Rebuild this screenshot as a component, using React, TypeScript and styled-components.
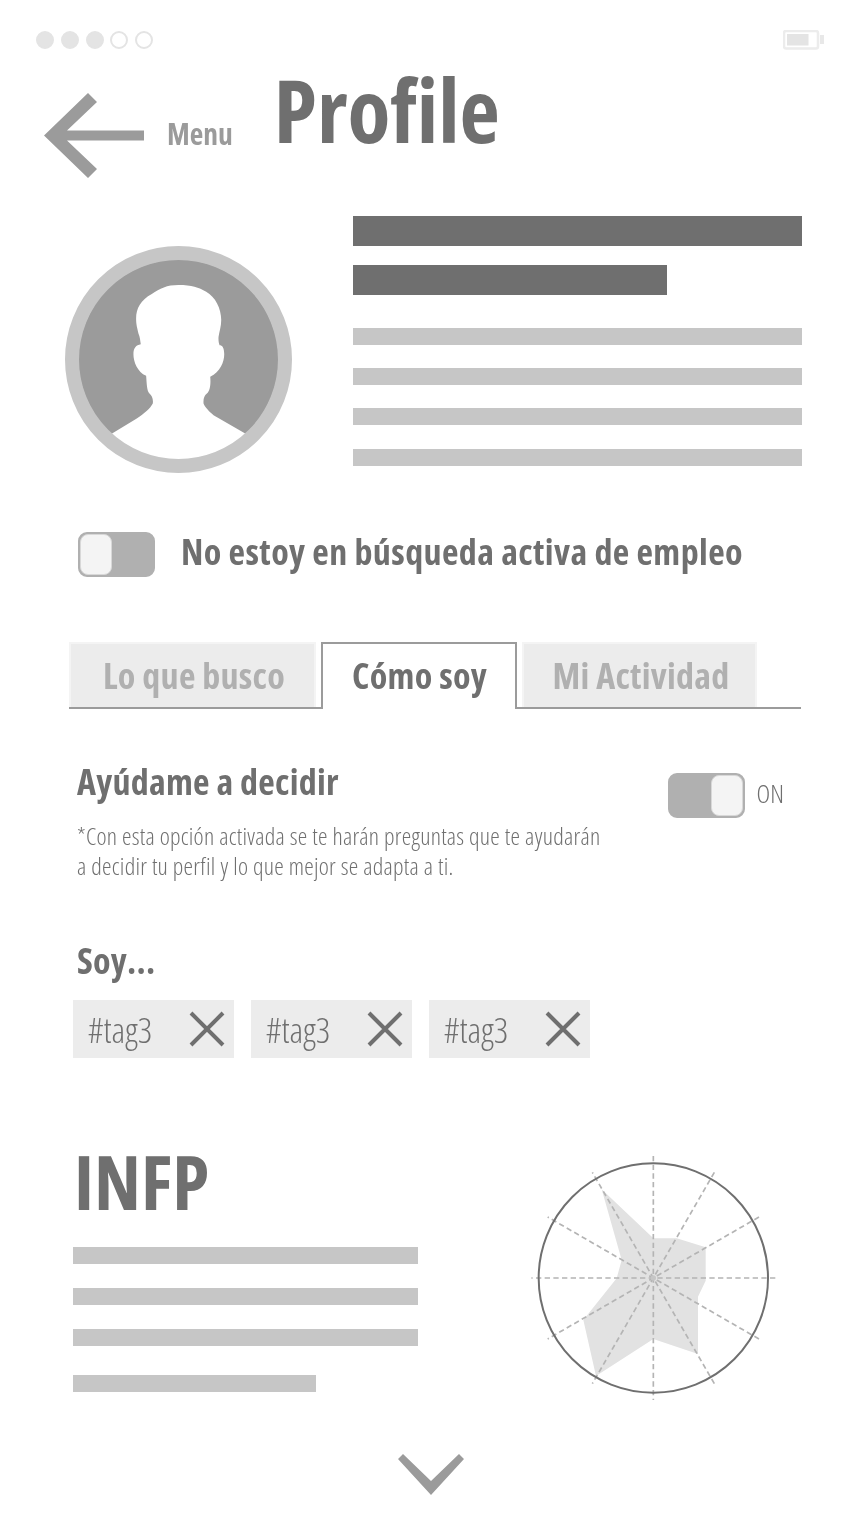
import React from 'react';
import styled, {createGlobalStyle} from "styled-components";

const GlobalStyle = createGlobalStyle`
  html, body {
    margin: 0;
    padding: 0;
    background: #fff;
  }
  body {
    font-family: "Open Sans", "Liberation Sans", sans-serif;
    font-stretch: 75%;
    color: #6f6f6f;
  }
`

const Page = styled.div`
  width: 862px;
  height: 1533px;
  overflow: hidden;
  will-change: transform;
`

const StatusBar = styled.div`
  display: flex;
  justify-content: space-between;
  align-items: center;
  padding: 31px 38px 0 36px;
  height: 18px;
`

const Dots = styled.div`
  display: flex;
  gap: 6.75px;
`

const Dot = styled.span<{ $filled?: boolean }>`
  box-sizing: border-box;
  width: 18px;
  height: 18px;
  border-radius: 50%;
  border: 2px solid #e4e4e4;
  background: ${p => p.$filled ? '#e4e4e4' : 'transparent'};
`

const Header = styled.header`
  display: flex;
  align-items: flex-end;
  height: 85px;
  margin-top: 44px;
  padding-left: 44px;
`

const MenuLabel = styled.span`
  font-weight: 700;
  font-size: 29.5px;
  line-height: 40px;
  color: #9b9b9b;
  margin: 0 41px 24px 23px;
`

const Title = styled.h1`
  margin: 0 0 19px;
  font-weight: 700;
  font-size: 88px;
  line-height: 100px;
  color: #6f6f6f;
`

const ProfileRow = styled.section`
  display: flex;
  gap: 61px;
  margin-top: 38px;
  padding-left: 65px;
`

const AvatarWrap = styled.div`
  margin-top: 30px;
  width: 227px;
  height: 227px;
`

const Lines = styled.div`
  display: flex;
  flex-direction: column;
  gap: 23px;
`

const Bar = styled.div<{ $w: number; $h?: number; $dark?: boolean; $mt?: number }>`
  width: ${p => p.$w}px;
  height: ${p => p.$h ?? 17}px;
  background: ${p => p.$dark ? '#6f6f6f' : '#c6c6c6'};
  margin-top: ${p => p.$mt ?? 0}px;
`

const StatusRow = styled.div`
  display: flex;
  align-items: center;
  gap: 26px;
  margin-top: 59px;
  padding-left: 78px;
`

const Switch = styled.div<{ $on?: boolean }>`
  box-sizing: border-box;
  display: flex;
  justify-content: ${p => p.$on ? 'flex-end' : 'flex-start'};
  width: 77px;
  height: 45px;
  border: 2px solid #b0b0b0;
  border-radius: 9px;
  background: #b0b0b0;
`

const Knob = styled.span`
  box-sizing: border-box;
  width: 32px;
  height: 41px;
  border: 1px solid #d8d8d8;
  border-radius: 8px;
  background: #f4f4f4;
`

const StatusText = styled.span`
  font-weight: 700;
  font-size: 36px;
  line-height: 31px;
  letter-spacing: 0.4px;
  padding-bottom: 6px;
`

const Tabs = styled.nav`
  box-sizing: border-box;
  display: flex;
  gap: 5px;
  width: 732px;
  height: 67px;
  margin: 65px 0 0 69px;
  border-bottom: 2px solid #9b9b9b;
`

const Tab = styled.div<{ $active?: boolean; $w: number }>`
  box-sizing: border-box;
  width: ${p => p.$w}px;
  height: ${p => p.$active ? 67 : 65}px;
  padding-left: ${p => p.$active ? 1 : 3}px;
  text-align: center;
  font-weight: 700;
  font-size: 36px;
  line-height: 64px;
  letter-spacing: 0.25px;
  color: ${p => p.$active ? '#6f6f6f' : '#b0b0b0'};
  background: ${p => p.$active ? '#fff' : '#ececec'};
  border: 2px solid ${p => p.$active ? '#9b9b9b' : '#f4f4f4'};
  border-bottom: ${p => p.$active ? 'none' : '0'};
`

const HelpRow = styled.section`
  display: flex;
  justify-content: space-between;
  align-items: flex-start;
  margin-top: 52px;
  padding: 0 78px 0 77px;
`

const SectionTitle = styled.h2`
  margin: 0;
  font-weight: 700;
  font-size: 36px;
  line-height: 42px;
  letter-spacing: 0.25px;
`

const Note = styled.p`
  margin: 18px 0 0;
  font-weight: 340;
  font-size: 24px;
  line-height: 30px;
  letter-spacing: 0.26px;
  width: 530px;
`

const OnGroup = styled.div`
  display: flex;
  align-items: center;
  gap: 12px;
  margin-top: 12px;
`

const OnLabel = styled.span`
  font-weight: 300;
  font-size: 26px;
  padding-bottom: 6px;
`

const TagsSection = styled.section`
  margin-top: 59px;
  padding-left: 77px;
`

const TagList = styled.div`
  display: flex;
  gap: 17.5px;
  margin: 18px 0 0 -4px;
`

const Tag = styled.div`
  display: flex;
  align-items: center;
  justify-content: space-between;
  box-sizing: border-box;
  width: 160.5px;
  height: 58px;
  padding: 0 9px 0 15px;
  background: #ececec;
  font-weight: 300;
  font-size: 35.5px;
`

const Bottom = styled.section`
  display: flex;
  justify-content: space-between;
  margin-top: 78px;
  padding: 0 72px 0 73px;
`

const TypeCol = styled.div`
  display: flex;
  flex-direction: column;
`

const TypeTitle = styled.h2`
  margin: 0 0 0 1px;
  font-weight: 700;
  font-size: 75.5px;
  line-height: 90px;
`

const TypeLines = styled.div`
  display: flex;
  flex-direction: column;
  gap: 24px;
  margin-top: 21px;
`

const Radar = styled.svg`
  display: block;
  width: 270px;
  height: 260px;
  margin-top: 14px;
`

const More = styled.svg`
  display: block;
  margin: 44px 0 0 398px;
`

const BackArrow = () => (
  <svg width="100" height="85" viewBox="0 0 100 85">
    <path d="M100 37.5 H23 L53 9 L44 0 L0 42.5 L44 85 L53 76 L23 47.5 H100 Z" fill="#9b9b9b"/>
  </svg>
)

const Battery = () => (
  <svg width="41" height="20" viewBox="0 0 41 20">
    <rect x="1" y="1" width="34" height="17.5" rx="2" fill="none" stroke="#ececec" strokeWidth="2.5"/>
    <rect x="4" y="4" width="21.5" height="11.5" fill="#e4e4e4"/>
    <rect x="37" y="5" width="4" height="9" fill="#e8e8e8"/>
  </svg>
)

const Avatar = () => (
  <svg width="227" height="227" viewBox="45 48 680 680">
    <circle cx="385" cy="388" r="300" fill="#9b9b9b"/>
    <path
      d="M385 165 C425 165 445 172 468 185 C495 200 513 235 513 270 C513 290 507 305 505 320 C504 332 506 340 508 345 C516 345 522 352 522 372 C522 395 510 425 480 440 C482 460 480 482 470 490 C462 497 459 505 460 520 C463 530 478 545 490 555 L590 613 A305 305 0 0 1 181 613 L260 565 C285 548 300 535 308 520 C310 505 305 497 298 490 C290 482 290 460 288 437 C262 425 250 395 250 372 C250 352 258 345 272 342 C270 330 270 322 265 310 C262 295 258 285 258 265 C258 235 272 210 305 192 C330 175 350 165 385 165 Z"
      fill="#fff"
    />
    <circle cx="385" cy="388" r="319" fill="none" stroke="#c6c6c6" strokeWidth="42"/>
  </svg>
)

const CloseMark = () => (
  <svg width="36" height="36" viewBox="0 0 36 36">
    <path d="M2 2 L34 34 M34 2 L2 34" stroke="#6f6f6f" strokeWidth="4" fill="none"/>
  </svg>
)

const spokes = Array.from({length: 6}, (_, i) => i * 30)

export default function App() {
  return (
    <Page>
      <GlobalStyle/>
      <StatusBar>
        <Dots>
          <Dot $filled/>
          <Dot $filled/>
          <Dot $filled/>
          <Dot/>
          <Dot/>
        </Dots>
        <Battery/>
      </StatusBar>

      <Header>
        <BackArrow/>
        <MenuLabel>Menu</MenuLabel>
        <Title>Profile</Title>
      </Header>

      <ProfileRow>
        <AvatarWrap>
          <Avatar/>
        </AvatarWrap>
        <Lines>
          <Bar $w={449} $h={30} $dark/>
          <Bar $w={314} $h={30} $dark $mt={-4}/>
          <Bar $w={449} $mt={10}/>
          <Bar $w={449}/>
          <Bar $w={449}/>
          <Bar $w={449} $mt={1}/>
        </Lines>
      </ProfileRow>

      <StatusRow>
        <Switch><Knob/></Switch>
        <StatusText>No estoy en búsqueda activa de empleo</StatusText>
      </StatusRow>

      <Tabs>
        <Tab $w={247}>Lo que busco</Tab>
        <Tab $w={196} $active>Cómo soy</Tab>
        <Tab $w={235}>Mi Actividad</Tab>
      </Tabs>

      <HelpRow>
        <div>
          <SectionTitle>Ayúdame a decidir</SectionTitle>
          <Note>*Con esta opción activada se te harán preguntas que te ayudarán a decidir tu perfil y lo que mejor se adapta a ti.</Note>
        </div>
        <OnGroup>
          <Switch $on><Knob/></Switch>
          <OnLabel>ON</OnLabel>
        </OnGroup>
      </HelpRow>

      <TagsSection>
        <SectionTitle>Soy...</SectionTitle>
        <TagList>
          {[0, 1, 2].map(i => (
            <Tag key={i}>#tag3<CloseMark/></Tag>
          ))}
        </TagList>
      </TagsSection>

      <Bottom>
        <TypeCol>
          <TypeTitle>INFP</TypeTitle>
          <TypeLines>
            <Bar $w={345}/>
            <Bar $w={345}/>
            <Bar $w={345}/>
            <Bar $w={243} $mt={5}/>
          </TypeLines>
        </TypeCol>
        <Radar viewBox="0 0 810 780">
          <polygon
            points="245,118 397,262 402,265 470,265 557,292 557,392 534,440 534,612 400,567 228,678 190,510 290,385 305,330"
            fill="#e2e2e2"
          />
          {spokes.map(a => (
            <line
              key={a}
              x1="400" y1="18" x2="400" y2="750"
              stroke="#b4b4b4"
              strokeWidth="5"
              strokeDasharray="16 10"
              transform={`rotate(${a} 400 384)`}
            />
          ))}
          <circle cx="400" cy="384" r="8" fill="#c6c6c6"/>
          <circle cx="400" cy="384" r="344" fill="none" stroke="#6f6f6f" strokeWidth="6"/>
        </Radar>
      </Bottom>

      <More width="66" height="41" viewBox="0 0 66 41">
        <path d="M0 5 L5 0 L33 27 L61 0 L66 5 L33 41 Z" fill="#9b9b9b"/>
      </More>
    </Page>
  );
}
